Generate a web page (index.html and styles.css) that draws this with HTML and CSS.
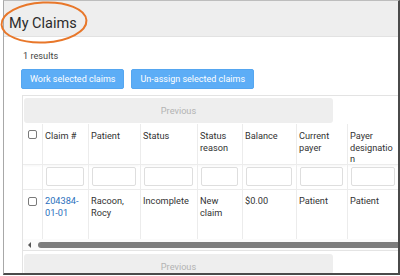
FILE: index.html
```html
<!DOCTYPE html>
<html>
<head>
<meta charset="utf-8">
<link rel="stylesheet" href="styles.css">
</head>
<body>
<div class="frame">
  <div class="page-head"><h1 class="title">My Claims</h1></div>
  <div class="content">
    <div class="results">1 results</div>
    <div class="actions">
      <button class="btn">Work selected claims</button>
      <button class="btn">Un-assign selected claims</button>
    </div>
    <div class="grid-wrap">
      <div class="pager"><span>Previous</span></div>
      <div class="grid">
        <div class="hcell chk"><span class="box"></span></div>
        <div class="hcell">Claim #</div>
        <div class="hcell">Patient</div>
        <div class="hcell">Status</div>
        <div class="hcell">Status reason</div>
        <div class="hcell">Balance</div>
        <div class="hcell">Current payer</div>
        <div class="hcell">Payer designation</div>

        <div class="fcell chk"></div>
        <div class="fcell"><span class="input"></span></div>
        <div class="fcell"><span class="input"></span></div>
        <div class="fcell"><span class="input"></span></div>
        <div class="fcell"><span class="input"></span></div>
        <div class="fcell"><span class="input"></span></div>
        <div class="fcell"><span class="input"></span></div>
        <div class="fcell"><span class="input"></span></div>

        <div class="dcell chk"><span class="box"></span></div>
        <div class="dcell"><a class="link">204384-01-01</a></div>
        <div class="dcell">Racoon, Rocy</div>
        <div class="dcell">Incomplete</div>
        <div class="dcell">New claim</div>
        <div class="dcell">$0.00</div>
        <div class="dcell">Patient</div>
        <div class="dcell">Patient</div>
      </div>
      <div class="hscroll"><span class="arrow"></span><span class="thumb"></span></div>
      <div class="pager pager-bottom"><span>Previous</span></div>
    </div>
  </div>
</div>
<svg class="highlight" width="100" height="50" viewBox="0 0 100 50">
  <ellipse cx="44" cy="22.5" rx="42.5" ry="20" transform="rotate(-3 44 22.5)" fill="none" stroke="#e8772a" stroke-width="2"/>
</svg>
</body>
</html>
```

FILE: styles.css
```css
* { box-sizing: border-box; }
html, body { margin: 0; padding: 0; background: #fff; }
body {
  font-family: Roboto, "Liberation Sans", sans-serif;
  color: #333;
  width: 400px;
  height: 276px;
  overflow: hidden;
  position: relative;
}
.frame {
  margin-left: 3px;
  width: 397px;
  height: 275px;
  border-left: 1px solid #a8a8a8;
  border-top: 1px solid #bdbdbd;
  border-right: 2px solid #4a4a4a;
  border-bottom: 2px solid #4a4a4a;
  overflow: hidden;
  background: #fff;
}
.page-head {
  height: 36px;
  background: #eeeeee;
  border-bottom: 1px solid #e2e2e2;
  padding: 13.5px 0 0 5px;
}
.title {
  margin: 0;
  font-size: 14.5px;
  line-height: 17px;
  font-weight: 400;
  color: #2b2b2b;
}
.content { padding-left: 18px; }
.results {
  margin-top: 13px;
  font-size: 9.2px;
  line-height: 12px;
  color: #444;
  padding-left: 1px;
}
.actions {
  display: flex;
  gap: 7px;
  margin-top: 7px;
  margin-left: -1px;
}
.btn {
  height: 20px;
  padding: 0 8px;
  border: 1px solid #55a6f0;
  border-radius: 2px;
  background: #5cadf6;
  color: #fff;
  font-family: inherit;
  font-size: 9px;
  line-height: 18px;
}
.grid-wrap {
  margin-top: 6px;
  border-top: 1px solid #e3e3e3;
  border-left: 1px solid #e3e3e3;
}
.pager {
  width: 309px;
  height: 25px;
  margin: 2px 0 0 1px;
  background: #eeeeee;
  border-radius: 3px;
  text-align: center;
  font-size: 9.2px;
  line-height: 25px;
  color: #b3b3b3;
}
.grid {
  display: grid;
  grid-template-columns: 19px 46px 52px 57px 45px 54px 51px 52px;
  margin-top: 1px;
  font-size: 9.2px;
  line-height: 11.7px;
  color: #333;
}
.hcell, .fcell, .dcell {
  border-left: 1px solid #ececec;
  padding-left: 2px;
  padding-right: 2px;
}
.chk { border-left: none; padding: 0; display: flex; justify-content: center; }
.hcell {
  height: 41px;
  padding-top: 6px;
  overflow-wrap: anywhere;
  border-bottom: 1px solid #ececec;
  box-shadow: 0 2px 2px -1px rgba(0,0,0,0.04);
}
.hcell.chk { padding-top: 6px; align-items: flex-start; }
.fcell {
  height: 25px;
  padding: 2px 4px 4px 3px;
  border-bottom: 1px solid #ececec;
}
.fcell.chk { padding: 0; }
.input {
  display: block;
  height: 19px;
  border: 1px solid #dedede;
  border-radius: 2px;
  background: #fff;
}
.dcell {
  height: 49px;
  padding-top: 5px;
}
.dcell.chk { padding-top: 7px; align-items: flex-start; }
.box {
  display: block;
  width: 9px;
  height: 9px;
  border: 1px solid #7a7a7a;
  border-radius: 2px;
  background: #fff;
}
.link { color: #2a6fbd; }
.hscroll {
  height: 12px;
  display: flex;
  align-items: center;
  border-bottom: 1px solid #e4e4e4;
  background: #fbfbfb;
  padding-left: 5px;
}
.arrow {
  width: 0;
  height: 0;
  border-top: 3px solid transparent;
  border-bottom: 3px solid transparent;
  border-right: 3px solid #555;
}
.thumb {
  margin-left: 7px;
  height: 6px;
  flex: 1;
  background: #7d7d7d;
  border-radius: 3px 0 0 3px;
}
.pager-bottom { margin-top: 3px; height: 20px; line-height: 25px; }
.highlight {
  position: absolute;
  left: 0;
  top: 0;
}
```
